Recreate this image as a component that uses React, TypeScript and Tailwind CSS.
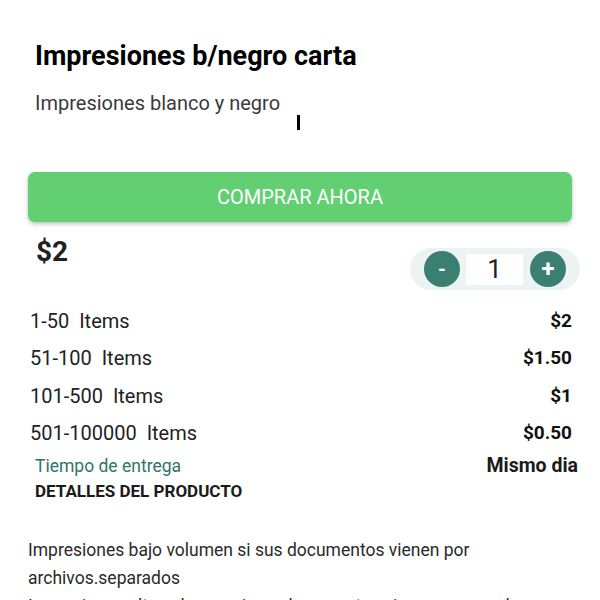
import { useState } from 'react';

const tiers = [
  { range: '1-50', price: '$2' },
  { range: '51-100', price: '$1.50' },
  { range: '101-500', price: '$1' },
  { range: '501-100000', price: '$0.50' },
];

export default function App() {
  const [qty, setQty] = useState(1);

  return (
    <div className="h-[600px] w-[600px] overflow-hidden bg-white font-['Roboto',sans-serif] text-[#212121]">
      <div className="px-[35px] pt-[39px]">
        <h1 className="text-[27px] font-bold leading-[34px] text-black">Impresiones b/negro carta</h1>
        <div className="mt-[17px] flex items-start">
          <p className="text-[20px] leading-[26px] text-[#3a3a3a]">Impresiones blanco y negro</p>
          <span className="ml-[17px] mt-[25px] block h-[15px] w-[3px] bg-black" />
        </div>
      </div>

      <div className="mx-[28px] mt-[42px]">
        <button className="flex h-[50px] w-full items-center justify-center rounded-[7px] bg-[#62cf72] text-[20px] text-white shadow-[0_2px_4px_rgba(0,0,0,0.25)]">
          COMPRAR AHORA
        </button>

        <div className="mt-[13px] flex items-start justify-between">
          <span className="ml-[8px] text-[28px] font-bold leading-[34px]">$2</span>
          <div className="mt-[13px] mr-[-8px] flex h-[42px] w-[170px] items-center rounded-full bg-[#ebf4f3] px-[14px]">
            <button
              onClick={() => setQty(Math.max(1, qty - 1))}
              className="flex h-[36px] w-[36px] items-center justify-center rounded-full bg-[#3b7f72] text-[20px] font-bold text-white"
            >
              -
            </button>
            <div className="ml-[6px] flex h-[31px] w-[57px] items-center justify-center bg-white text-[26px] text-[#222]">{qty}</div>
            <button
              onClick={() => setQty(qty + 1)}
              className="ml-[7px] flex h-[36px] w-[36px] items-center justify-center rounded-full bg-[#3b7f72] text-[24px] font-bold text-white"
            >
              +
            </button>
          </div>
        </div>

        <div className="mt-[12px]">
          {tiers.map((t) => (
            <div key={t.range} className="flex h-[37.5px] items-center justify-between pl-[2px]">
              <span className="whitespace-pre text-[20px] text-[#222]">{t.range}  Items</span>
              <span className="text-[19px] font-bold text-[#111]">{t.price}</span>
            </div>
          ))}
        </div>

        <div className="mt-[3px] flex items-start justify-between pl-[7px]">
          <div>
            <p className="text-[17.5px] leading-[22px] text-[#2f7566]">Tiempo de entrega</p>
            <p className="mt-[3px] text-[17px] font-bold leading-[22px] text-[#1a1a1a]">DETALLES DEL PRODUCTO</p>
          </div>
          <span className="mr-[-6px] text-[19.5px] font-bold leading-[22px] text-[#1a1a1a]">Mismo dia</span>
        </div>

        <div className="mt-[34px] text-[17.5px] leading-[28px] text-[#2a2a2a]">
          <p>Impresiones bajo volumen si sus documentos vienen por</p>
          <p>archivos.separados</p>
          <p>Impresiones alto volumen si sus documentos vienen en un solo archivo</p>
        </div>
      </div>
    </div>
  );
}
